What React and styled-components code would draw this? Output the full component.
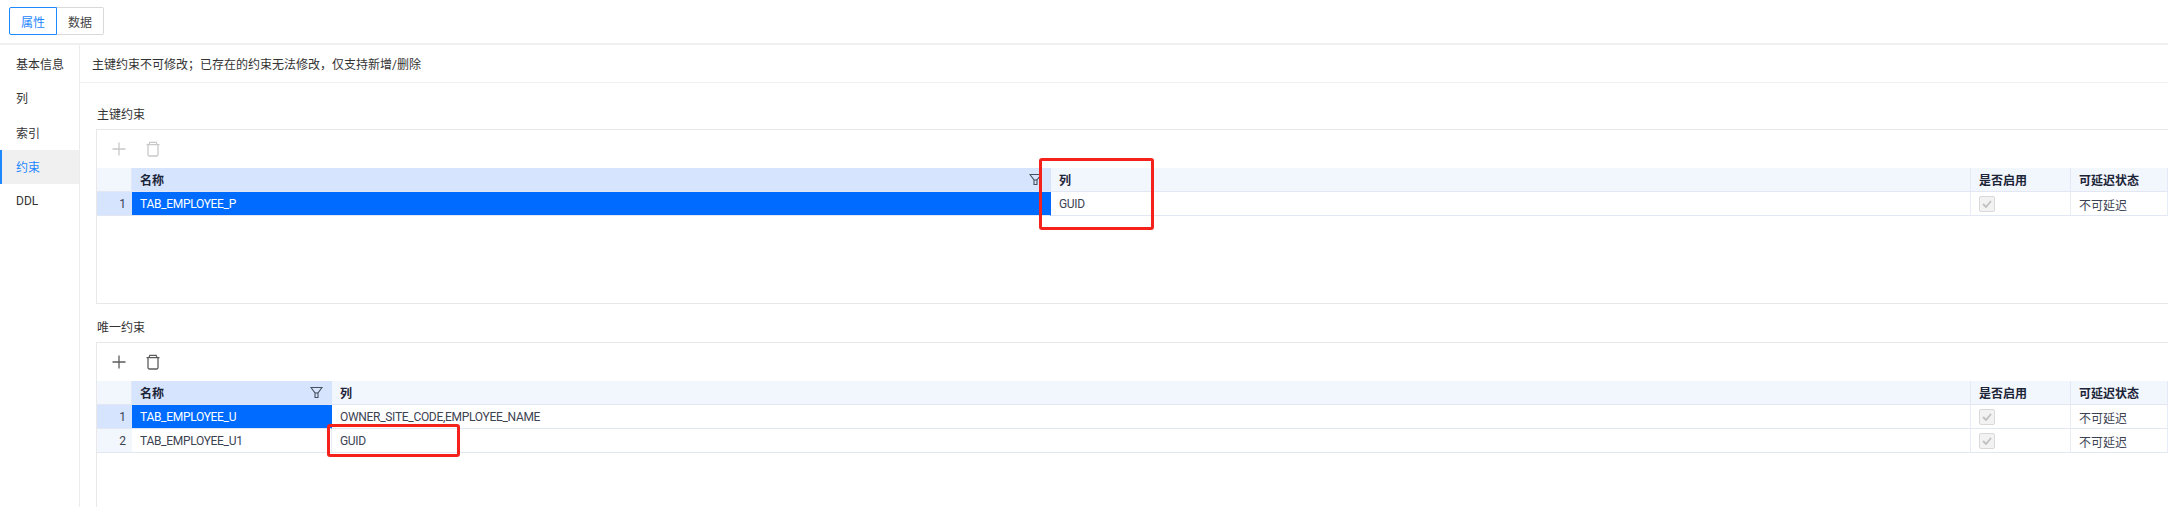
import React from 'react';
import styled, { createGlobalStyle } from 'styled-components';

const GlobalStyle = createGlobalStyle`
  html, body { margin: 0; padding: 0; background: #fff; }
  body {
    width: 2168px;
    height: 507px;
    overflow: hidden;
    font-family: Roboto, "Noto Sans CJK SC", sans-serif;
    font-size: 12px;
    color: #333;
  }
`;

const Page = styled.div`
  display: flex;
  flex-direction: column;
  height: 507px;
`;

const TopBar = styled.div`
  height: 45px;
  flex: none;
  padding: 7px 0 0 9px;
  box-sizing: border-box;
  display: flex;
  align-items: flex-start;
  border-bottom: 2px solid #f0f0f0;
`;

const TabButton = styled.div`
  width: ${p => p.$width}px;
  height: 28px;
  box-sizing: border-box;
  display: flex;
  align-items: center;
  justify-content: center;
  font-size: 12px;
  color: ${p => (p.$active ? '#1e88ff' : '#444')};
  border: 1px solid ${p => (p.$active ? '#1e88ff' : '#d9d9d9')};
  border-left-width: ${p => (p.$active ? 1 : 0)}px;
  border-radius: ${p => (p.$active ? '2px 0 0 2px' : '0 2px 2px 0')};
`;

const Body = styled.div`
  flex: 1;
  display: flex;
  min-height: 0;
`;

const Sidebar = styled.nav`
  width: 80px;
  flex: none;
  box-sizing: border-box;
  border-right: 1px solid #ececec;
  padding-top: 1px;
`;

const NavItem = styled.div`
  height: 34.5px;
  box-sizing: border-box;
  display: flex;
  align-items: center;
  padding-left: ${p => (p.$active ? 14 : 16)}px;
  font-size: 12px;
  color: ${p => (p.$active ? '#1e88ff' : '#333')};
  background: ${p => (p.$active ? '#f0f0f0' : 'transparent')};
  border-left: ${p => (p.$active ? '2px solid #1e88ff' : 'none')};
`;

const Main = styled.main`
  flex: 1;
  min-width: 0;
  display: flex;
  flex-direction: column;
`;

const Notice = styled.div`
  height: 38px;
  flex: none;
  box-sizing: border-box;
  padding: 0 0 0 12px;
  display: flex;
  align-items: center;
  border-bottom: 1px solid #f0f0f0;
  font-size: 12px;
  color: #333;
`;

const Section = styled.section`
  flex: ${p => (p.$grow ? 1 : 'none')};
  min-height: 0;
  display: flex;
  flex-direction: column;
  padding: ${p => p.$top}px 0 0 16px;
`;

const SectionTitle = styled.div`
  height: 18px;
  line-height: 18px;
  margin-bottom: 5px;
  font-size: 12px;
  color: #333;
  padding-left: 1px;
`;

const Panel = styled.div`
  position: relative;
  flex: ${p => (p.$height ? 'none' : 1)};
  height: ${p => (p.$height ? `${p.$height}px` : 'auto')};
  box-sizing: border-box;
  border: 1px solid #e8e8e8;
  border-right: none;
  border-bottom-width: ${p => (p.$open ? 0 : 1)}px;
`;

const Toolbar = styled.div`
  height: 38px;
  display: flex;
  align-items: center;
  gap: 18px;
  padding-left: 14px;
  color: ${p => (p.$disabled ? '#c8c8c8' : '#5c5c5c')};
`;

const ToolIcon = styled.svg`
  width: 16px;
  height: 16px;
  fill: none;
  stroke: currentColor;
  stroke-width: 1.3;
  display: block;
`;

const Grid = styled.div`
  display: grid;
  grid-template-columns: 35px ${p => p.$nameWidth}px 1fr 100px 97px;
`;

const HeaderCell = styled.div`
  height: 24px;
  box-sizing: border-box;
  display: flex;
  align-items: center;
  justify-content: space-between;
  padding: 0 8px;
  font-size: 12px;
  font-weight: 700;
  color: #1c2538;
  background: ${p => (p.$selected ? '#d6e4fd' : '#f2f6fd')};
  border-bottom: 1px solid #e2e7f3;
  border-right: 1px solid ${p => (p.$selected ? '#d6e4fd' : '#e4e9f5')};
`;

const IndexCell = styled.div`
  height: 24px;
  box-sizing: border-box;
  display: flex;
  align-items: center;
  justify-content: flex-end;
  padding: 1px 6px 0 0;
  font-size: 12px;
  color: #3c4352;
  background: ${p => (p.$selected ? '#d6e4fd' : '#f2f6fd')};
  border-bottom: 1px solid #e2e7f3;
`;

const Cell = styled.div`
  height: 24px;
  box-sizing: border-box;
  display: flex;
  align-items: center;
  padding: 1px 8px 0;
  font-size: 12px;
  letter-spacing: ${p => (p.$latin ? '-0.3px' : 'normal')};
  color: ${p => (p.$selected ? '#fff' : '#3c4352')};
  background: ${p => (p.$selected ? '#006cff' : '#fff')};
  border-bottom: 1px solid #e2e7f3;
  border-right: 1px solid ${p => (p.$selected ? '#006cff' : '#e8ecf6')};
`;

const CheckBox = styled.span`
  width: 16px;
  height: 16px;
  box-sizing: border-box;
  display: flex;
  align-items: center;
  justify-content: center;
  background: #f2f2f2;
  border: 1px solid #d9d9d9;
  border-radius: 2px;
  color: #c0c0c0;
`;

const Callout = styled.div`
  position: absolute;
  left: ${p => p.$left}px;
  top: ${p => p.$top}px;
  width: ${p => p.$width}px;
  height: ${p => p.$height}px;
  box-sizing: border-box;
  border: 3px solid #f5211b;
  border-radius: 3px;
  pointer-events: none;
`;

const PlusIcon = () => (
  <ToolIcon viewBox="0 0 16 16">
    <path d="M8 1.5v13M1.5 8h13" />
  </ToolIcon>
);

const TrashIcon = () => (
  <ToolIcon viewBox="0 0 16 16">
    <path d="M1.5 3.6h13M4 3.6l.8-2.3h6.4l.8 2.3M3 3.6v10c0 .8.5 1.4 1.2 1.4h7.6c.7 0 1.2-.6 1.2-1.4v-10" />
  </ToolIcon>
);

const FilterIcon = () => (
  <svg width="13" height="13" viewBox="0 0 13 13" fill="none" stroke="#46505f" strokeWidth="1.1">
    <path d="M1 1.5h11L8 7v4.5H5V7z" />
    <path d="M5 7h3" />
  </svg>
);

const CheckIcon = () => (
  <svg width="10" height="8" viewBox="0 0 10 8" fill="none" stroke="currentColor" strokeWidth="1.8">
    <path d="M1 4l3 3 5-6" />
  </svg>
);

const ConstraintTable = ({ nameWidth, rows }) => (
  <Grid $nameWidth={nameWidth}>
    <HeaderCell />
    <HeaderCell $selected>
      名称
      <FilterIcon />
    </HeaderCell>
    <HeaderCell>列</HeaderCell>
    <HeaderCell>是否启用</HeaderCell>
    <HeaderCell>可延迟状态</HeaderCell>
    {rows.map((row, i) => (
      <React.Fragment key={row.name}>
        <IndexCell $selected={row.selected}>{i + 1}</IndexCell>
        <Cell $latin $selected={row.selected}>{row.name}</Cell>
        <Cell $latin>{row.columns}</Cell>
        <Cell>
          <CheckBox>
            <CheckIcon />
          </CheckBox>
        </Cell>
        <Cell>不可延迟</Cell>
      </React.Fragment>
    ))}
  </Grid>
);

const navItems = ['基本信息', '列', '索引', '约束', 'DDL'];

export default function App() {
  return (
    <Page>
      <GlobalStyle />
      <TopBar>
        <TabButton $active $width={48}>属性</TabButton>
        <TabButton $width={47}>数据</TabButton>
      </TopBar>
      <Body>
        <Sidebar>
          {navItems.map(item => (
            <NavItem key={item} $active={item === '约束'}>{item}</NavItem>
          ))}
        </Sidebar>
        <Main>
          <Notice>主键约束不可修改；已存在的约束无法修改，仅支持新增/删除</Notice>
          <Section $top={23}>
            <SectionTitle>主键约束</SectionTitle>
            <Panel $height={175}>
              <Toolbar $disabled>
                <PlusIcon />
                <TrashIcon />
              </Toolbar>
              <ConstraintTable
                nameWidth={919}
                rows={[{ name: 'TAB_EMPLOYEE_P', columns: 'GUID', selected: true }]}
              />
              <Callout $left={942} $top={28} $width={115} $height={72} />
            </Panel>
          </Section>
          <Section $grow $top={15}>
            <SectionTitle>唯一约束</SectionTitle>
            <Panel $open>
              <Toolbar>
                <PlusIcon />
                <TrashIcon />
              </Toolbar>
              <ConstraintTable
                nameWidth={200}
                rows={[
                  { name: 'TAB_EMPLOYEE_U', columns: 'OWNER_SITE_CODE,EMPLOYEE_NAME', selected: true },
                  { name: 'TAB_EMPLOYEE_U1', columns: 'GUID' },
                ]}
              />
              <Callout $left={230} $top={81} $width={133} $height={33} />
            </Panel>
          </Section>
        </Main>
      </Body>
    </Page>
  );
}
